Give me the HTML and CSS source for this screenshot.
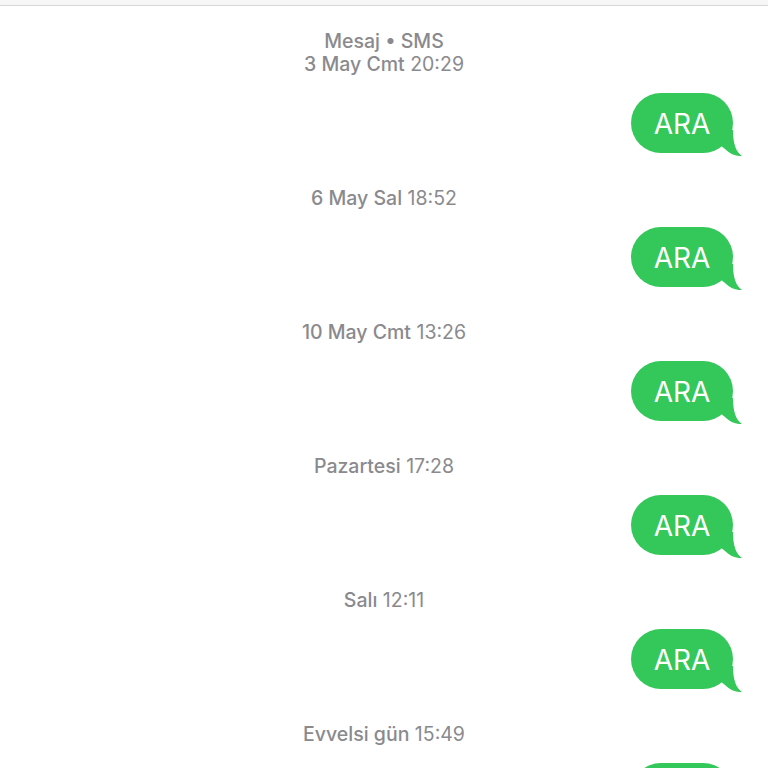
FILE: index.html
```html
<!DOCTYPE html>
<html lang="tr">
<head>
  <meta charset="UTF-8" />
  <title>Mesajlar</title>
  <link rel="stylesheet" href="styles.css">
</head>
<body>
  <!-- BARRA SUPERIORE -->
  <div class="top-bar"></div>

  <div class="thread">
    <div class="stamp"><b>Mesaj • SMS</b><br><b>3 May Cmt</b> 20:29</div>
    <div class="row"><div class="bubble">ARA<svg class="tail" viewBox="0 0 22 26" width="22" height="26"><path d="M0 0 H13 C13 14 16 22 22 26 C16 26.5 10 24 5 19 L0 15 Z"/></svg></div></div>

    <div class="stamp"><b>6 May Sal</b> 18:52</div>
    <div class="row"><div class="bubble">ARA<svg class="tail" viewBox="0 0 22 26" width="22" height="26"><path d="M0 0 H13 C13 14 16 22 22 26 C16 26.5 10 24 5 19 L0 15 Z"/></svg></div></div>

    <div class="stamp"><b>10 May Cmt</b> 13:26</div>
    <div class="row"><div class="bubble">ARA<svg class="tail" viewBox="0 0 22 26" width="22" height="26"><path d="M0 0 H13 C13 14 16 22 22 26 C16 26.5 10 24 5 19 L0 15 Z"/></svg></div></div>

    <div class="stamp"><b>Pazartesi</b> 17:28</div>
    <div class="row"><div class="bubble">ARA<svg class="tail" viewBox="0 0 22 26" width="22" height="26"><path d="M0 0 H13 C13 14 16 22 22 26 C16 26.5 10 24 5 19 L0 15 Z"/></svg></div></div>

    <div class="stamp"><b>Salı</b> 12:11</div>
    <div class="row"><div class="bubble">ARA<svg class="tail" viewBox="0 0 22 26" width="22" height="26"><path d="M0 0 H13 C13 14 16 22 22 26 C16 26.5 10 24 5 19 L0 15 Z"/></svg></div></div>

    <div class="stamp"><b>Evvelsi gün</b> 15:49</div>
    <div class="row"><div class="bubble"><svg class="tail" viewBox="0 0 22 26" width="22" height="26"><path d="M0 0 H13 C13 14 16 22 22 26 C16 26.5 10 24 5 19 L0 15 Z"/></svg></div></div>
  </div>
</body>
</html>
```

FILE: styles.css
```css
html,
body {
  margin: 0;
  height: 768px;
  overflow: hidden;
  background: #fff;
  font-family: Inter, "Noto Sans", sans-serif;
}

.top-bar {
  height: 5px;
  background: #f6f6f6;
  border-bottom: 1px solid #d6d6d6;
}

.thread {
  padding-top: 24px;
}

.stamp {
  text-align: center;
  font-size: 19.5px;
  line-height: 23px;
  color: #8a8a8e;
  margin-bottom: 17px;
}

.stamp b {
  font-weight: 500;
}

.row {
  display: flex;
  justify-content: flex-end;
  padding-right: 35px;
  margin-bottom: 34px;
}

.bubble {
  position: relative;
  width: 102px;
  height: 60px;
  border-radius: 30px;
  background: #34c759;
  color: #fff;
  font-size: 28px;
  line-height: 62px;
  text-align: center;
}

.tail {
  position: absolute;
  left: 89px;
  top: 37px;
  fill: #34c759;
}
```
